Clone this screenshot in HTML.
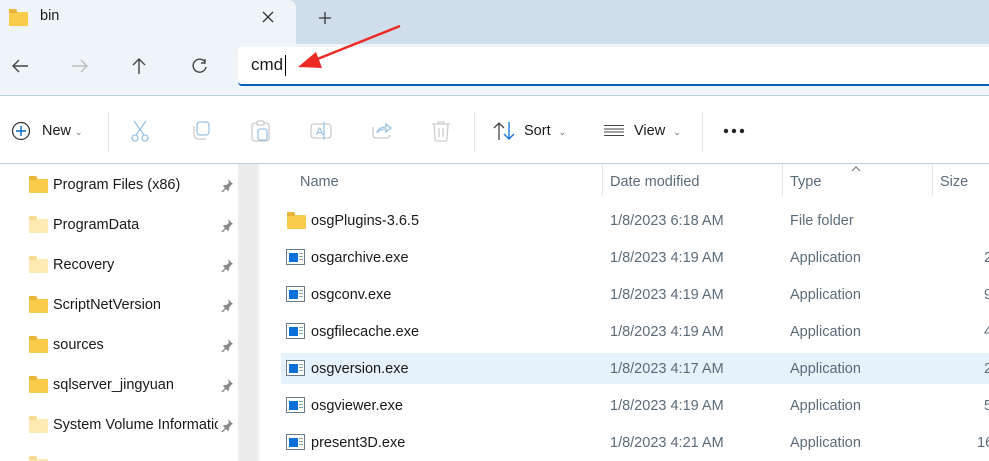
<!DOCTYPE html><html><head><style>
*{margin:0;padding:0;box-sizing:border-box}
html,body{width:989px;height:461px;overflow:hidden}
body{position:relative;background:#fff;font-family:"Segoe UI","Liberation Sans",sans-serif;color:#1a1a1a}
.a{position:absolute}
.t{font-size:14.5px;white-space:nowrap}
.fold{position:absolute;width:19px;height:14px;background:#f8cc4a;border-radius:1px}
.fold:before{content:"";position:absolute;left:0;top:-3px;width:8px;height:4px;background:#e8b43a;border-radius:1px 2px 0 0}
.fold.l{background:#fde9b2}.fold.l:before{background:#f7dc96}
.exe{position:absolute;width:19px;height:16px;border:1px solid #6b7a8a;background:#fff}
.exe:before{content:"";position:absolute;left:2px;top:3px;width:9px;height:9px;background:#0a6fd6}
.exe:after{content:"";position:absolute;right:1px;top:3px;width:4px;height:9px;background:repeating-linear-gradient(#8aa 0 1px,#fff 1px 3px)}
.pin{position:absolute;width:14px;height:14px}
.g{color:#5c6b7a}
</style></head><body>
<svg width="0" height="0" style="position:absolute"><defs><g id="pin"><path d="M8 1l5 5-2 1-2 3 0 2-1 1-2-2-4 4-1 0 0-1 4-4-2-2 1-1 2 0 3-2z" fill="#8a8a8a"/></g></defs></svg>
<div class="a" style="left:0;top:0;width:989px;height:44px;background:#cfdeea"></div>
<div class="a" style="left:0;top:0;width:296px;height:44px;background:#eff4f9;border-radius:0 8px 0 0"></div>
<div class="fold" style="left:9px;top:12px"></div>
<div class="a t" style="left:40px;top:8px">bin</div>
<svg class="a" style="left:262px;top:11px" width="12" height="12"><path d="M1 1l10 10M11 1L1 11" stroke="#333" stroke-width="1.3"/></svg>
<svg class="a" style="left:318px;top:11px" width="14" height="14"><path d="M7 1v12M1 7h12" stroke="#333" stroke-width="1.3"/></svg>
<div class="a" style="left:0;top:44px;width:989px;height:52px;background:#eff4f9;border-bottom:1px solid #bdd0dd"></div>
<svg class="a" style="left:11px;top:58px" width="18" height="16"><path d="M17 8H2M8 2L2 8l6 6" stroke="#444" stroke-width="1.4" fill="none"/></svg>
<svg class="a" style="left:71px;top:58px" width="18" height="16"><path d="M1 8h15M10 2l6 6-6 6" stroke="#bbb" stroke-width="1.4" fill="none"/></svg>
<svg class="a" style="left:131px;top:57px" width="16" height="18"><path d="M8 17V2M2 8l6-6 6 6" stroke="#444" stroke-width="1.4" fill="none"/></svg>
<svg class="a" style="left:191px;top:58px" width="17" height="17"><path d="M14 4A6.5 6.5 0 1 0 15 9" stroke="#444" stroke-width="1.4" fill="none"/><path d="M14 1v4h-4" stroke="#444" stroke-width="1.4" fill="none"/></svg>
<div class="a" style="left:238px;top:47px;width:751px;height:39px;background:#fff;border-radius:4px 0 0 4px;border-bottom:2px solid #005fb8"></div>
<div class="a" style="left:251px;top:55px;font-size:17px">cmd</div>
<div class="a" style="left:285px;top:55px;width:1px;height:21px;background:#000"></div>
<svg class="a" style="left:280px;top:22px" width="125" height="50"><line x1="120" y1="4" x2="30" y2="40" stroke="#ee2a24" stroke-width="2.5"/><polygon points="18,45 36,30 42,46" fill="#ee2a24"/></svg>
<div class="a" style="left:0;top:163px;width:989px;height:1px;background:#bdd0dd"></div>
<svg class="a" style="left:11px;top:121px" width="20" height="20"><circle cx="10" cy="10" r="8.5" fill="none" stroke="#333" stroke-width="1.2"/><path d="M10 5v10M5 10h10" stroke="#0067c0" stroke-width="1.4"/></svg>
<div class="a t" style="left:42px;top:123px">New <span style="font-size:9px;color:#666">⌄</span></div>
<div class="a" style="left:108px;top:112px;width:1px;height:40px;background:#e4e4e4"></div>
<svg class="a" style="left:130px;top:120px" width="20" height="22"><path d="M4 1l10 14M16 1L6 15" stroke="#9cc3e6" stroke-width="1.3"/><circle cx="5" cy="18" r="3" fill="none" stroke="#9cc3e6" stroke-width="1.3"/><circle cx="15" cy="18" r="3" fill="none" stroke="#9cc3e6" stroke-width="1.3"/></svg>
<svg class="a" style="left:191px;top:121px" width="20" height="20"><rect x="6" y="1" width="12" height="13" rx="3" fill="none" stroke="#9cc3e6" stroke-width="1.3"/><path d="M3 5v9a4 4 0 0 0 4 4h8" stroke="#ccc" stroke-width="1.3" fill="none"/></svg>
<svg class="a" style="left:251px;top:120px" width="20" height="22"><rect x="1" y="3" width="17" height="18" rx="3" fill="none" stroke="#ccc" stroke-width="1.3"/><rect x="6" y="1" width="7" height="4" rx="1" fill="#fff" stroke="#ccc" stroke-width="1.3"/><rect x="7" y="9" width="9" height="11" rx="2" fill="none" stroke="#9cc3e6" stroke-width="1.3"/></svg>
<svg class="a" style="left:310px;top:120px" width="22" height="22"><rect x="1" y="4" width="20" height="14" rx="3" fill="none" stroke="#ccc" stroke-width="1.3"/><text x="6" y="15" font-size="11" fill="#8ab5de" font-family="Liberation Sans">A</text><path d="M14 2v18" stroke="#9cc3e6" stroke-width="1.3"/></svg>
<svg class="a" style="left:371px;top:120px" width="22" height="20"><path d="M2 7v8a3 3 0 0 0 3 3h11a3 3 0 0 0 3-3" stroke="#ccc" stroke-width="1.3" fill="none"/><path d="M6 13c1-4 4-6 9-6V4l5 4-5 4V9c-4 0-7 1-9 4z" stroke="#9cc3e6" stroke-width="1.3" fill="none"/></svg>
<svg class="a" style="left:431px;top:120px" width="20" height="22"><path d="M1 4h18M7 4V2h6v2M3 4l1 15a2 2 0 0 0 2 2h8a2 2 0 0 0 2-2l1-15M8 8v9M12 8v9" stroke="#ccc" stroke-width="1.3" fill="none"/></svg>
<div class="a" style="left:474px;top:112px;width:1px;height:40px;background:#e4e4e4"></div>
<svg class="a" style="left:493px;top:121px" width="24" height="20"><path d="M6 19V2M1 7l5-5 5 5" stroke="#444" stroke-width="1.3" fill="none"/><path d="M16 1v17M11 13l5 5 5-5" stroke="#0a6fd6" stroke-width="1.3" fill="none"/></svg>
<div class="a t" style="left:524px;top:123px">Sort <span style="font-size:9px;color:#666;margin-left:4px">⌄</span></div>
<div class="a" style="left:604px;top:125px;width:20px;height:11px;background:repeating-linear-gradient(#444 0 1px,#fff 1px 3.3px)"></div>
<div class="a t" style="left:634px;top:123px">View <span style="font-size:9px;color:#666;margin-left:4px">⌄</span></div>
<div class="a" style="left:702px;top:112px;width:1px;height:40px;background:#e4e4e4"></div>
<svg class="a" style="left:723px;top:128px" width="24" height="6"><circle cx="3" cy="3" r="2.2" fill="#222"/><circle cx="11" cy="3" r="2.2" fill="#222"/><circle cx="19" cy="3" r="2.2" fill="#222"/></svg>
<div class="a" style="left:238px;top:164px;width:20px;height:297px;background:#ececec"></div>
<div class="a" style="left:258px;top:164px;width:2px;height:297px;background:#f6f6f6"></div>
<div class="fold" style="left:29px;top:179px"></div><div class="a t" style="left:53px;top:177px">Program Files (x86)</div><svg class="pin" style="left:220px;top:178px"><use href="#pin"/></svg>
<div class="fold l" style="left:29px;top:219px"></div><div class="a t" style="left:53px;top:217px">ProgramData</div><svg class="pin" style="left:220px;top:218px"><use href="#pin"/></svg>
<div class="fold l" style="left:29px;top:259px"></div><div class="a t" style="left:53px;top:257px">Recovery</div><svg class="pin" style="left:220px;top:258px"><use href="#pin"/></svg>
<div class="fold" style="left:29px;top:299px"></div><div class="a t" style="left:53px;top:297px">ScriptNetVersion</div><svg class="pin" style="left:220px;top:298px"><use href="#pin"/></svg>
<div class="fold" style="left:29px;top:339px"></div><div class="a t" style="left:53px;top:337px">sources</div><svg class="pin" style="left:220px;top:338px"><use href="#pin"/></svg>
<div class="fold" style="left:29px;top:379px"></div><div class="a t" style="left:53px;top:377px">sqlserver_jingyuan</div><svg class="pin" style="left:220px;top:378px"><use href="#pin"/></svg>
<div class="fold l" style="left:29px;top:419px"></div><div class="a t" style="left:53px;top:417px;width:165px;overflow:hidden">System Volume Information</div><svg class="pin" style="left:220px;top:418px"><use href="#pin"/></svg>
<div class="fold l" style="left:29px;top:459px"></div>
<div class="a t g" style="left:300px;top:174px">Name</div>
<div class="a" style="left:602px;top:164px;width:1px;height:32px;background:#e5e5e5"></div>
<div class="a t g" style="left:610px;top:174px">Date modified</div>
<div class="a" style="left:782px;top:164px;width:1px;height:32px;background:#e5e5e5"></div>
<div class="a t g" style="left:790px;top:174px">Type</div>
<svg class="a" style="left:851px;top:166px" width="10" height="6"><path d="M1 5l4-4 4 4" stroke="#777" fill="none"/></svg>
<div class="a" style="left:932px;top:164px;width:1px;height:32px;background:#e5e5e5"></div>
<div class="a t g" style="left:940px;top:174px">Size</div>
<div class="a" style="left:281px;top:353px;width:708px;height:31px;background:#e5f1fb"></div>
<div class="fold" style="left:287px;top:215px"></div><div class="a t" style="left:311px;top:213px">osgPlugins-3.6.5</div><div class="a t g" style="left:610px;top:213px">1/8/2023 6:18 AM</div><div class="a t g" style="left:790px;top:213px">File folder</div>
<div class="exe" style="left:286px;top:249px"></div><div class="a t" style="left:311px;top:250px">osgarchive.exe</div><div class="a t g" style="left:610px;top:250px">1/8/2023 4:19 AM</div><div class="a t g" style="left:790px;top:250px">Application</div><div class="a t g" style="left:984px;top:250px">2</div>
<div class="exe" style="left:286px;top:286px"></div><div class="a t" style="left:311px;top:287px">osgconv.exe</div><div class="a t g" style="left:610px;top:287px">1/8/2023 4:19 AM</div><div class="a t g" style="left:790px;top:287px">Application</div><div class="a t g" style="left:984px;top:287px">9</div>
<div class="exe" style="left:286px;top:323px"></div><div class="a t" style="left:311px;top:324px">osgfilecache.exe</div><div class="a t g" style="left:610px;top:324px">1/8/2023 4:19 AM</div><div class="a t g" style="left:790px;top:324px">Application</div><div class="a t g" style="left:984px;top:324px">4</div>
<div class="exe" style="left:286px;top:360px"></div><div class="a t" style="left:311px;top:361px">osgversion.exe</div><div class="a t g" style="left:610px;top:361px">1/8/2023 4:17 AM</div><div class="a t g" style="left:790px;top:361px">Application</div><div class="a t g" style="left:984px;top:361px">2</div>
<div class="exe" style="left:286px;top:397px"></div><div class="a t" style="left:311px;top:398px">osgviewer.exe</div><div class="a t g" style="left:610px;top:398px">1/8/2023 4:19 AM</div><div class="a t g" style="left:790px;top:398px">Application</div><div class="a t g" style="left:984px;top:398px">5</div>
<div class="exe" style="left:286px;top:434px"></div><div class="a t" style="left:311px;top:435px">present3D.exe</div><div class="a t g" style="left:610px;top:435px">1/8/2023 4:21 AM</div><div class="a t g" style="left:790px;top:435px">Application</div><div class="a t g" style="left:977px;top:435px">16</div>
</body></html>
